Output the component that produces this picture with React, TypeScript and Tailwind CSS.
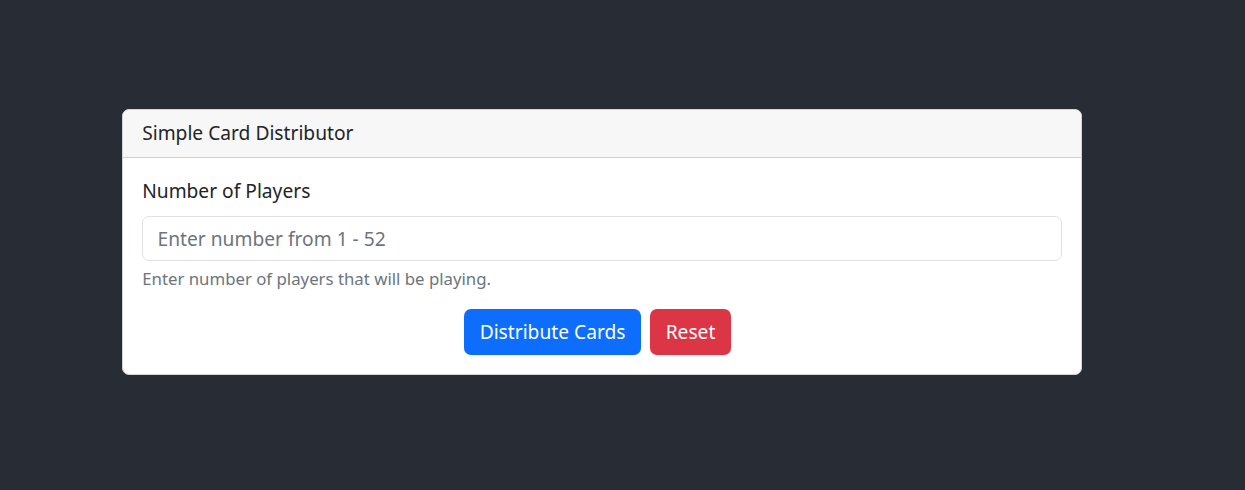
export default function App() {
  return (
    <div
      className="min-h-[490px] w-full bg-[#282c34] pt-[109px] pl-[122px]"
      style={{ fontFamily: '"Noto Sans", "Liberation Sans", sans-serif' }}
    >
      <div className="w-[960px] overflow-hidden rounded-[7px] border border-[#d4d4d4] bg-white">
        {/* Header */}
        <div className="flex h-[48px] items-center border-b border-[#d0d0d0] bg-[#f7f7f7] px-[19.2px]">
          <h5 className="text-[19.2px] leading-[28.8px] text-[#212529]">Simple Card Distributor</h5>
        </div>

        {/* Body */}
        <div className="px-[19.2px] pt-[19.2px] pb-[19.2px]">
          <label className="block text-[19.2px] leading-[28.8px] text-[#212529]" htmlFor="players">
            Number of Players
          </label>
          <input
            id="players"
            type="text"
            placeholder="Enter number from 1 - 52"
            className="mt-[9.6px] block h-[45.6px] w-full rounded-[7px] border border-[#dee2e6] px-[14.4px] text-[19.2px] text-[#212529] outline-none placeholder:text-[#6c757d]"
          />
          <p className="mt-[4.8px] text-[16.8px] leading-[25.2px] text-[#6c757d]">
            Enter number of players that will be playing.
          </p>

          <div className="mt-[18px] flex justify-center gap-[9px] pr-[9px]">
            <button className="h-[45.6px] rounded-[7px] bg-[#0d6efd] px-[15.6px] text-[19.2px] text-white">
              Distribute Cards
            </button>
            <button className="h-[45.6px] rounded-[7px] bg-[#dc3545] px-[15.6px] text-[19.2px] text-white">
              Reset
            </button>
          </div>
        </div>
      </div>
    </div>
  );
}
